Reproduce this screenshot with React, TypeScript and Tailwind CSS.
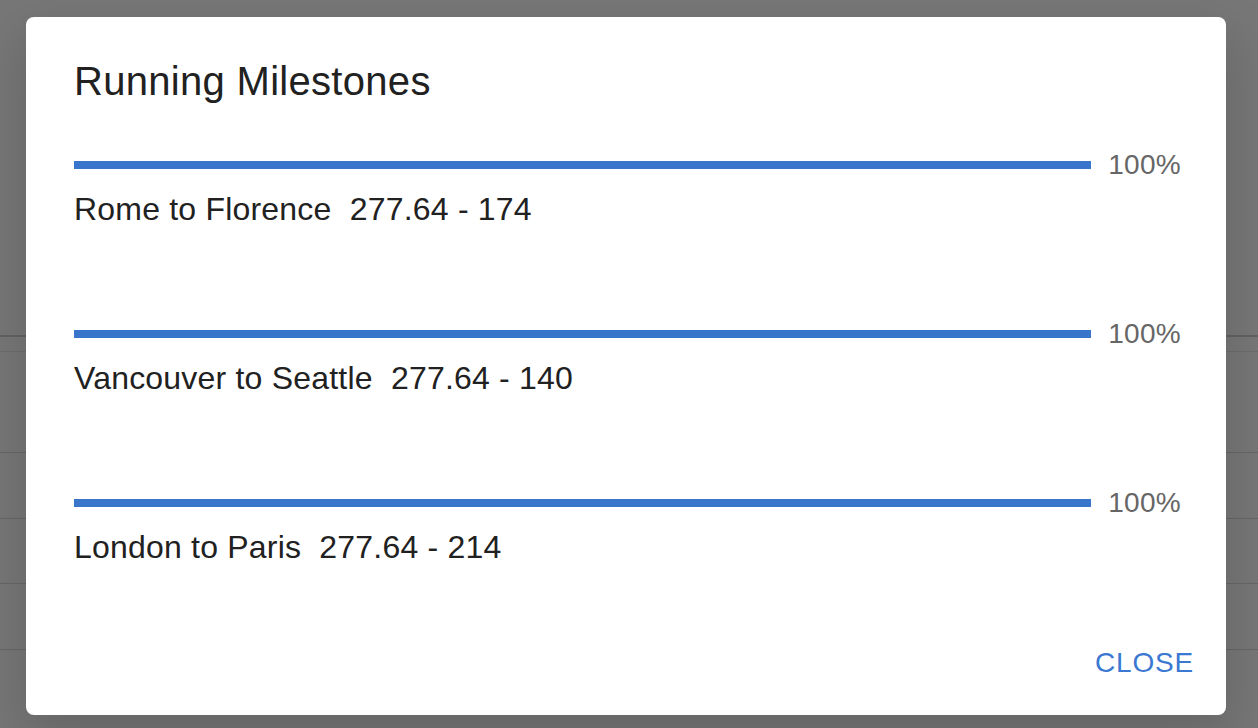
import React from "react";

const items = [
  { name: "Rome to Florence", value: "277.64 - 174" },
  { name: "Vancouver to Seattle", value: "277.64 - 140" },
  { name: "London to Paris", value: "277.64 - 214" },
];

export default function App() {
  return (
    <div
      className="relative h-[728px] w-full overflow-hidden bg-[#777777]"
      style={{ fontFamily: '"Liberation Sans", Arial, Helvetica, sans-serif' }}
    >
      {/* underlying page rows seen through the backdrop */}
      <div className="flex flex-col">
        <div className="h-[335px]" />
        <div className="h-[2px] bg-[#626262]" />
        <div className="h-[14px]" />
        <div className="h-px bg-[#6d6d6d]" />
        <div className="h-[100px]" />
        <div className="h-px bg-[#666666]" />
        <div className="h-[65px]" />
        <div className="h-px bg-[#666666]" />
        <div className="h-[64px]" />
        <div className="h-px bg-[#666666]" />
        <div className="h-[65px]" />
        <div className="h-px bg-[#666666]" />
      </div>

      {/* dialog */}
      <div className="absolute inset-0 pl-[26px] pt-[17px]">
        <div className="flex h-[698px] w-[1200px] flex-col rounded-[8px] bg-white shadow-[0_20px_50px_6px_rgba(0,0,0,0.14)]">
          <h2 className="px-[48px] pb-[32px] pt-[32px] text-[40px] font-normal leading-[64px] tracking-[0.3px] text-[#212121]">
            Running Milestones
          </h2>
          <div className="flex flex-col gap-[81px] pl-[48px] pr-[45px]">
            {items.map((it) => (
              <div key={it.name} className="flex flex-col">
                <div className="flex h-[40px] items-center">
                  <div className="mr-[17px] h-[8px] flex-1 bg-[#3a75cc]" />
                  <div className="min-w-[70px] text-[28px] leading-[40px] tracking-[0.3px] text-[#666666]">
                    100%
                  </div>
                </div>
                <div className="text-[32px] leading-[48px] tracking-[0.2px] text-[#212121]">
                  {it.name}
                  {"\u00a0\u00a0"}
                  {it.value}
                </div>
              </div>
            ))}
          </div>
          <div className="mt-auto flex justify-end p-[16px]">
            <button className="flex h-[72px] items-center rounded-[8px] px-[16px] text-[28px] uppercase tracking-[0.8px] text-[#3a78d2]">
              Close
            </button>
          </div>
        </div>
      </div>
    </div>
  );
}
